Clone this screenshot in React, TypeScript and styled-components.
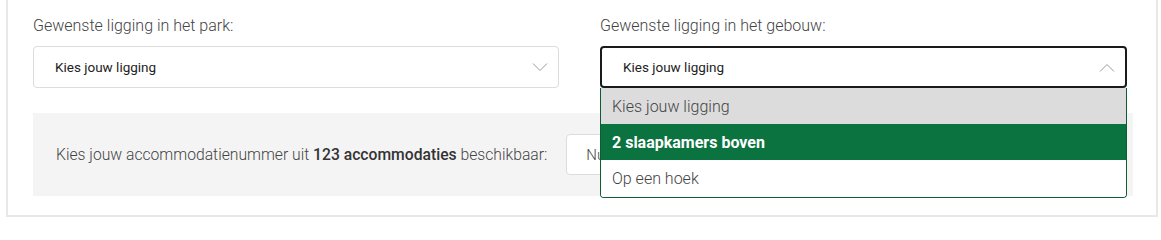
import React from 'react';
import styled, { createGlobalStyle } from 'styled-components';

const GlobalStyle = createGlobalStyle`
  body {
    margin: 0;
    background: #ffffff;
    font-family: Roboto, 'Liberation Sans', sans-serif;
  }
`;

const Card = styled.div`
  margin: 0 3px 0 6px;
  padding: 16px 23px 19px 25px;
  border: 2px solid #e8e8e8;
  border-top: none;
  background: #ffffff;
`;

const FieldRow = styled.div`
  display: grid;
  grid-template-columns: 526px 527px;
  column-gap: 41px;
`;

const Field = styled.div`
  position: relative;
`;

const Label = styled.div`
  font-size: 16px;
  line-height: 20px;
  font-weight: 300;
  color: #444444;
  margin-bottom: 10px;
`;

const SelectBox = styled.div<{ $open?: boolean }>`
  box-sizing: border-box;
  height: 42px;
  display: flex;
  align-items: center;
  justify-content: space-between;
  padding: 0 10px 0 21px;
  border: ${p => (p.$open ? '2px solid #1a1a1a' : '1px solid #dcdcdc')};
  border-radius: 4px;
  font-size: 13.5px;
  color: #222222;
  background: #ffffff;
`;

const Options = styled.ul`
  position: absolute;
  top: 100%;
  left: 0;
  right: 0;
  margin: 0;
  padding: 0;
  list-style: none;
  border: 1px solid #0e5b35;
  border-top: none;
  border-radius: 0 0 4px 4px;
  background: #ffffff;
  overflow: hidden;
  z-index: 2;
`;

const Option = styled.li<{ $variant: 'placeholder' | 'active' | 'plain' }>`
  height: 36px;
  display: flex;
  align-items: center;
  padding-left: 11px;
  font-size: 16px;
  font-weight: ${p => (p.$variant === 'active' ? 700 : 300)};
  color: ${p => (p.$variant === 'active' ? '#ffffff' : '#444444')};
  background: ${p =>
    p.$variant === 'placeholder' ? '#dcdcdc' : p.$variant === 'active' ? '#0b7340' : '#ffffff'};
  &:last-child {
    height: 37px;
  }
`;

const AvailabilityBar = styled.div`
  margin-top: 25px;
  width: 1100px;
  box-sizing: border-box;
  padding: 21px 23px;
  background: #f4f4f4;
  display: flex;
  align-items: center;
  gap: 19px;
`;

const AvailabilityText = styled.span`
  font-size: 15.7px;
  font-weight: 300;
  color: #444444;
  strong {
    font-weight: 500;
    color: #333333;
  }
`;

const NumberInput = styled.div`
  box-sizing: border-box;
  width: 220px;
  height: 41px;
  display: flex;
  align-items: center;
  padding-left: 19px;
  border: 1px solid #dcdcdc;
  border-radius: 4px;
  background: #ffffff;
  font-size: 15px;
  font-weight: 300;
  color: #444444;
`;

const Chevron = ({ up }: { up?: boolean }) => (
  <svg width="16" height="9" viewBox="0 0 16 9" fill="none">
    <path
      d={up ? 'M1 8.5 L8 1.5 L15 8.5' : 'M1 0.5 L8 7.5 L15 0.5'}
      stroke="#9a9a9a"
      strokeWidth="1"
    />
  </svg>
);

export default function App() {
  return (
    <>
      <GlobalStyle />
      <Card>
        <FieldRow>
          <Field>
            <Label>Gewenste ligging in het park:</Label>
            <SelectBox>
              <span>Kies jouw ligging</span>
              <Chevron />
            </SelectBox>
          </Field>
          <Field>
            <Label>Gewenste ligging in het gebouw:</Label>
            <SelectBox $open>
              <span>Kies jouw ligging</span>
              <Chevron up />
            </SelectBox>
            <Options>
              <Option $variant="placeholder">Kies jouw ligging</Option>
              <Option $variant="active">2 slaapkamers boven</Option>
              <Option $variant="plain">Op een hoek</Option>
            </Options>
          </Field>
        </FieldRow>
        <AvailabilityBar>
          <AvailabilityText>
            Kies jouw accommodatienummer uit <strong>123 accommodaties</strong> beschikbaar:
          </AvailabilityText>
          <NumberInput>Nummer</NumberInput>
        </AvailabilityBar>
      </Card>
    </>
  );
}
